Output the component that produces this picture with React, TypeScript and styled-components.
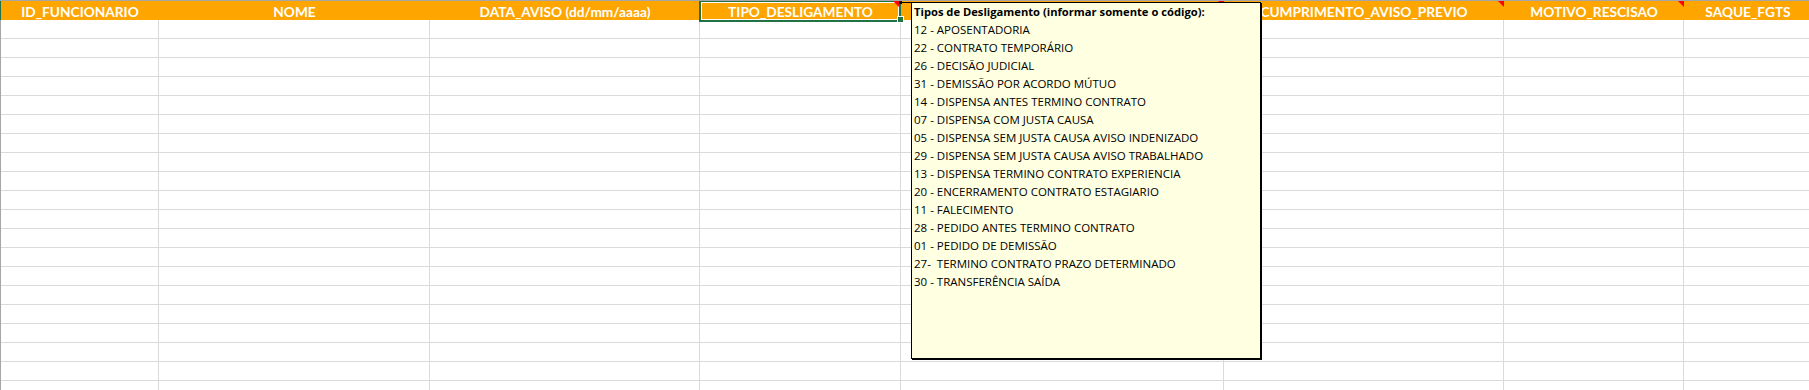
import styled, { createGlobalStyle } from "styled-components";

const GlobalStyle = createGlobalStyle`
  html, body {
    margin: 0;
    padding: 0;
    background: #ffffff;
    overflow: hidden;
  }
`;

const columns = [
  { title: "ID_FUNCIONARIO", width: 158 },
  { title: "NOME", width: 271 },
  { title: "DATA_AVISO (dd/mm/aaaa)", width: 270 },
  { title: "TIPO_DESLIGAMENTO", width: 201, comment: true, selected: true },
  { title: "", width: 323, comment: true },
  { title: "CUMPRIMENTO_AVISO_PREVIO", width: 280, comment: true },
  { title: "MOTIVO_RESCISAO", width: 180, comment: true },
  { title: "SAQUE_FGTS", width: 128 },
];

const gridTemplate = columns.map((c) => `${c.width}px`).join(" ");

const tipos = [
  "12 - APOSENTADORIA",
  "22 - CONTRATO TEMPORÁRIO",
  "26 - DECISÃO JUDICIAL",
  "31 - DEMISSÃO POR ACORDO MÚTUO",
  "14 - DISPENSA ANTES TERMINO CONTRATO",
  "07 - DISPENSA COM JUSTA CAUSA",
  "05 - DISPENSA SEM JUSTA CAUSA AVISO INDENIZADO",
  "29 - DISPENSA SEM JUSTA CAUSA AVISO TRABALHADO",
  "13 - DISPENSA TERMINO CONTRATO EXPERIENCIA",
  "20 - ENCERRAMENTO CONTRATO ESTAGIARIO",
  "11 - FALECIMENTO",
  "28 - PEDIDO ANTES TERMINO CONTRATO",
  "01 - PEDIDO DE DEMISSÃO",
  "27-  TERMINO CONTRATO PRAZO DETERMINADO",
  "30 - TRANSFERÊNCIA SAÍDA",
];

const Sheet = styled.div`
  position: relative;
  width: 1809px;
  height: 390px;
  overflow: hidden;
  border-top: 1px solid #a6a6a6;
  box-sizing: border-box;
`;

const HeaderRow = styled.div`
  display: grid;
  grid-template-columns: ${gridTemplate};
  height: 19px;
  background: #ffa500;
  border-left: 1px solid #217346;
`;

const HeaderCell = styled.div<{ $comment?: boolean; $selected?: boolean }>`
  position: relative;
  display: flex;
  align-items: center;
  justify-content: center;
  white-space: nowrap;
  font-family: Lato, "Liberation Sans", sans-serif;
  font-weight: 700;
  font-size: 13.7px;
  color: #ffffff;
  padding-top: 1px;

  ${(p) =>
    p.$comment &&
    `
    &::after {
      content: "";
      position: absolute;
      top: 0;
      right: ${p.$selected ? "2px" : "0"};
      border-top: 6px solid #ff0000;
      border-left: 6px solid transparent;
      z-index: 3;
    }
  `}

  ${(p) =>
    p.$selected &&
    `
    &::before {
      content: "";
      position: absolute;
      left: -1px;
      right: 0;
      top: -1px;
      bottom: -2px;
      border: 2px solid #217346;
      box-shadow: inset 0 0 0 1px #ffffff;
      z-index: 2;
    }
  `}
`;

const FillHandle = styled.span`
  position: absolute;
  right: -3px;
  bottom: -3px;
  width: 5px;
  height: 5px;
  background: #217346;
  border: 1px solid #ffffff;
  z-index: 4;
`;

const BodyRow = styled.div`
  display: grid;
  grid-template-columns: ${gridTemplate};
  height: 19px;
  border-left: 1px solid #a6a6a6;
`;

const Cell = styled.div`
  border-right: 1px solid #dadada;
  border-bottom: 1px solid #dadada;
`;

const Connector = styled.div`
  position: absolute;
  left: 900px;
  top: 1px;
  width: 12px;
  height: 1px;
  background: #000000;
  z-index: 5;

  &::before {
    content: "";
    position: absolute;
    left: -1px;
    top: -1px;
    width: 3px;
    height: 3px;
    background: #000000;
  }
`;

const CommentBox = styled.div`
  position: absolute;
  left: 911px;
  top: 1px;
  width: 346px;
  height: 355px;
  background: #ffffe1;
  border: 1px solid #000000;
  box-shadow: 1px 1px 0 #000000;
  padding: 0 0 0 2px;
  display: flex;
  flex-direction: column;
  font-family: "Open Sans", "Noto Sans", sans-serif;
  line-height: 18px;
  color: #000000;
  z-index: 6;
  white-space: pre;
`;

const CommentTitle = styled.div`
  font-weight: 700;
  font-size: 11.2px;
`;

const CommentLine = styled.div`
  font-weight: 400;
  font-size: 11.5px;
`;

const rows = Array.from({ length: 20 }, (_, i) => i);

const App = () => {
  return (
    <>
      <GlobalStyle />
      <Sheet>
        <HeaderRow>
          {columns.map((c, i) => (
            <HeaderCell key={i} $comment={c.comment} $selected={c.selected}>
              {c.title}
              {c.selected && <FillHandle />}
            </HeaderCell>
          ))}
        </HeaderRow>
        {rows.map((r) => (
          <BodyRow key={r}>
            {columns.map((_, i) => (
              <Cell key={i} />
            ))}
          </BodyRow>
        ))}
        <Connector />
        <CommentBox>
          <CommentTitle>Tipos de Desligamento (informar somente o código):</CommentTitle>
          {tipos.map((t) => (
            <CommentLine key={t}>{t}</CommentLine>
          ))}
        </CommentBox>
      </Sheet>
    </>
  );
};

export default App;
